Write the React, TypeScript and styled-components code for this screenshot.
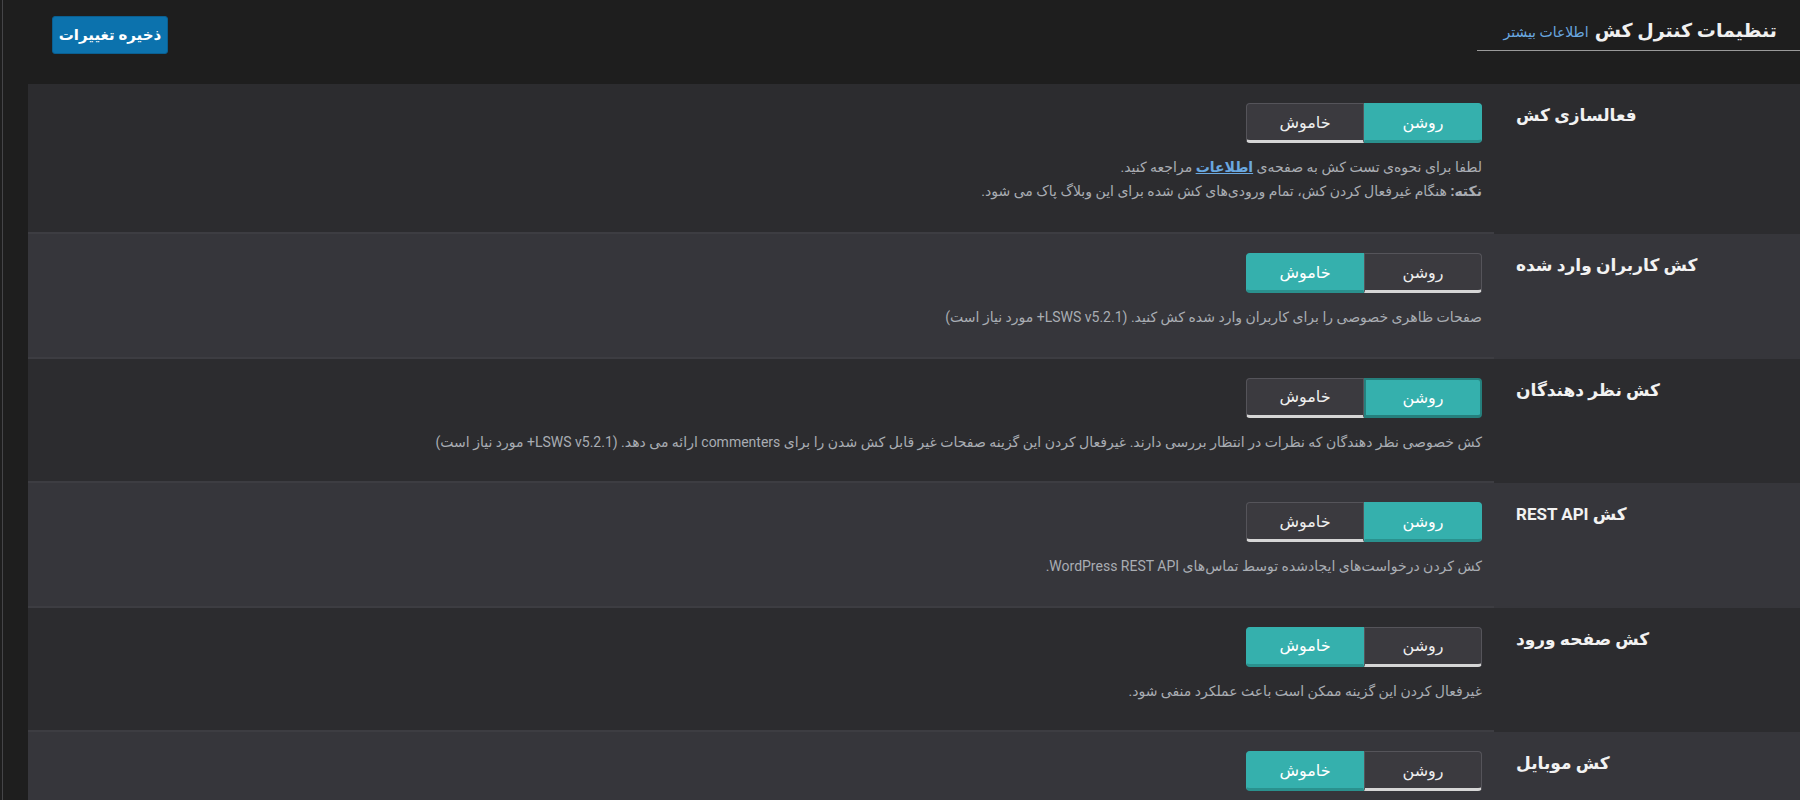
import React from 'react';
import styled, { createGlobalStyle } from 'styled-components';

const GlobalStyle = createGlobalStyle`
    html, body {
        margin: 0;
        padding: 0;
        background: #1e1e1e;
        font-family: Roboto, "DejaVu Sans", sans-serif;
        overflow: hidden;
    }
`;

const Page = styled.div`
    width: 1800px;
    height: 800px;
    overflow: hidden;
    margin-left: 2px;
    border-left: 1px solid #454548;
    box-sizing: border-box;
    padding-left: 25px;
    background: #1e1e1e;
`;

const Header = styled.div`
    direction: rtl;
    display: flex;
    justify-content: space-between;
    align-items: flex-start;
    height: 84px;
`;

const TitleBlock = styled.div`
    width: 325px;
    box-sizing: border-box;
    margin-top: 17px;
    padding: 0 25px 5px 0;
    border-bottom: 1px solid #9a9a9a;
    display: flex;
    align-items: baseline;
    gap: 6px;
    white-space: nowrap;
`;

const Title = styled.h1`
    margin: 0;
    font-size: 19px;
    line-height: 28px;
    font-weight: 700;
    color: #f0f0f0;
`;

const MoreLink = styled.a`
    font-size: 14px;
    color: #6aa8e0;
    text-decoration: none;
`;

const SaveButton = styled.button`
    margin: 16px 0 0 24px;
    width: 116px;
    height: 38px;
    padding: 0;
    background: #0c72ad;
    color: #fff;
    border: 1px solid #0a5f91;
    border-radius: 3px;
    font-family: inherit;
    font-size: 15px;
    font-weight: 700;
`;

const Table = styled.div`
    direction: rtl;
    display: flex;
    flex-direction: column;
`;

const Row = styled.div<{ light: boolean }>`
    display: flex;
    background: ${({ light }) => (light ? '#36363b' : '#2c2c2f')};
`;

const Label = styled.div`
    width: 308px;
    flex: none;
    box-sizing: border-box;
    padding: 21px 0 0 22px;
    text-align: left;
    font-size: 17px;
    font-weight: 700;
    color: #f2f2f2;
`;

const Cell = styled.div<{ first: boolean }>`
    flex: 1;
    padding: 19px 12px 0 0;
    border-top: ${({ first }) => (first ? 'none' : '2px solid #3d3d42')};
    margin-top: ${({ first }) => (first ? '0' : '-2px')};
`;

const Toggle = styled.div`
    display: inline-flex;
    flex-direction: row;
`;

const ToggleButton = styled.div<{ active: boolean; side: 'right' | 'left'; focus?: boolean }>`
    width: 118px;
    height: 40px;
    box-sizing: border-box;
    display: flex;
    align-items: center;
    justify-content: center;
    font-size: 16px;
    color: ${({ active }) => (active ? '#ffffff' : '#eeeeee')};
    background: ${({ active }) => (active ? '#35b0ad' : '#3b3a3f')};
    border: 1px solid ${({ active }) => (active ? '#35b0ad' : '#55545a')};
    border-bottom: 3px solid ${({ active }) => (active ? '#2a918e' : '#d6d6d6')};
    border-radius: ${({ side }) => (side === 'right' ? '0 4px 4px 0' : '4px 0 0 4px')};
    ${({ focus }) => (focus ? 'border: 2px solid #25807d; border-bottom: 3px solid #25807d;' : '')}
`;

const Desc = styled.div<{ first: boolean }>`
    margin-top: 12px;
    font-size: 14px;
    line-height: 24px;
    color: #a9adb3;
    padding-bottom: ${({ first }) => (first ? '31px' : '29.5px')};
`;

const DescLink = styled.a`
    color: #6aa8e0;
    font-weight: 700;
    text-decoration: underline;
`;

type Setting = {
    label: string;
    on: boolean;
    focus?: boolean;
    desc: React.ReactNode;
};

const settings: Setting[] = [
    {
        label: 'فعالسازی کش',
        on: true,
        desc: (
            <>
                لطفا برای نحوه‌ی تست کش به صفحه‌ی <DescLink href="#">اطلاعات</DescLink> مراجعه کنید.
                <br />
                <b>نکته:</b> هنگام غیرفعال کردن کش، تمام ورودی‌های کش شده برای این وبلاگ پاک می شود.
            </>
        ),
    },
    {
        label: 'کش کاربران وارد شده',
        on: false,
        desc: 'صفحات ظاهری خصوصی را برای کاربران وارد شده کش کنید. (LSWS v5.2.1+ مورد نیاز است)',
    },
    {
        label: 'کش نظر دهندگان',
        on: true,
        focus: true,
        desc: 'کش خصوصی نظر دهندگان که نظرات در انتظار بررسی دارند. غیرفعال کردن این گزینه صفحات غیر قابل کش شدن را برای commenters ارائه می دهد. (LSWS v5.2.1+ مورد نیاز است)',
    },
    {
        label: 'کش REST API',
        on: true,
        desc: 'کش کردن درخواست‌های ایجادشده توسط تماس‌های WordPress REST API.',
    },
    {
        label: 'کش صفحه ورود',
        on: false,
        desc: 'غیرفعال کردن این گزینه ممکن است باعث عملکرد منفی شود.',
    },
    {
        label: 'کش موبایل',
        on: false,
        desc: 'کش کردن صفحات موبایل به صورت جداگانه.',
    },
];

export default function App() {
    return (
        <>
            <GlobalStyle />
            <Page>
                <Header>
                    <TitleBlock>
                        <Title>تنظیمات کنترل کش</Title>
                        <MoreLink href="#">اطلاعات بیشتر</MoreLink>
                    </TitleBlock>
                    <SaveButton>ذخیره تغییرات</SaveButton>
                </Header>
                <Table>
                    {settings.map((s, i) => (
                        <Row key={s.label} light={i % 2 === 1}>
                            <Label>{s.label}</Label>
                            <Cell first={i === 0}>
                                <Toggle>
                                    <ToggleButton side="right" active={s.on} focus={s.focus}>روشن</ToggleButton>
                                    <ToggleButton side="left" active={!s.on}>خاموش</ToggleButton>
                                </Toggle>
                                <Desc first={i === 0}>{s.desc}</Desc>
                            </Cell>
                        </Row>
                    ))}
                </Table>
            </Page>
        </>
    );
}
